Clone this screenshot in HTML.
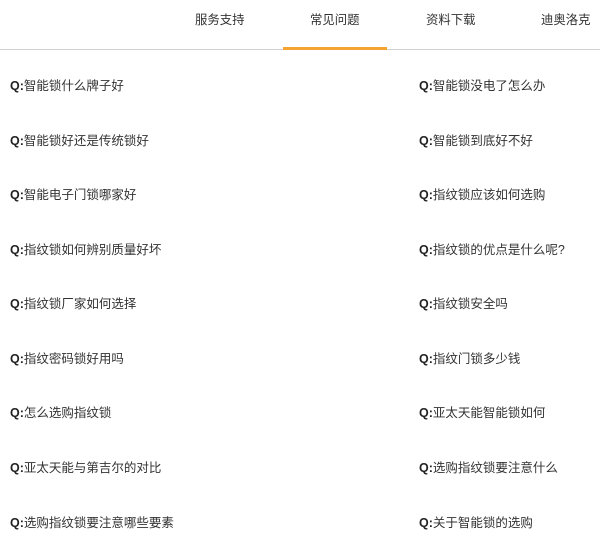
<!DOCTYPE html>
<html><head><meta charset="utf-8"><style>
body{margin:0;width:600px;height:534px;background:#fff;font-family:"Liberation Sans","Noto Sans CJK SC",sans-serif;overflow:hidden;position:relative}
.nav{position:absolute;top:0;left:0;width:600px;height:49px;border-bottom:1px solid #d0d0d0}
.t{position:absolute;top:11px;font-size:12.4px;color:#333;line-height:18px;white-space:nowrap}
.bar{position:absolute;left:283px;top:47px;width:104px;height:3px;background:#f5a331}
.q{position:absolute;font-size:12.5px;color:#333;line-height:16px;white-space:nowrap}
.q b{color:#222}
</style></head><body>
<div class="nav">
<div class="t" style="left:195px">服务支持</div>
<div class="t" style="left:310px">常见问题</div>
<div class="t" style="left:426px">资料下载</div>
<div class="t" style="left:541px">迪奥洛克</div>
<div class="bar"></div>
</div>
<div class="q" style="left:10px;top:78px"><b>Q:</b>智能锁什么牌子好</div>
<div class="q" style="left:419px;top:78px"><b>Q:</b>智能锁没电了怎么办</div>
<div class="q" style="left:10px;top:133px"><b>Q:</b>智能锁好还是传统锁好</div>
<div class="q" style="left:419px;top:133px"><b>Q:</b>智能锁到底好不好</div>
<div class="q" style="left:10px;top:187px"><b>Q:</b>智能电子门锁哪家好</div>
<div class="q" style="left:419px;top:187px"><b>Q:</b>指纹锁应该如何选购</div>
<div class="q" style="left:10px;top:242px"><b>Q:</b>指纹锁如何辨别质量好坏</div>
<div class="q" style="left:419px;top:242px"><b>Q:</b>指纹锁的优点是什么呢?</div>
<div class="q" style="left:10px;top:296px"><b>Q:</b>指纹锁厂家如何选择</div>
<div class="q" style="left:419px;top:296px"><b>Q:</b>指纹锁安全吗</div>
<div class="q" style="left:10px;top:351px"><b>Q:</b>指纹密码锁好用吗</div>
<div class="q" style="left:419px;top:351px"><b>Q:</b>指纹门锁多少钱</div>
<div class="q" style="left:10px;top:405px"><b>Q:</b>怎么选购指纹锁</div>
<div class="q" style="left:419px;top:405px"><b>Q:</b>亚太天能智能锁如何</div>
<div class="q" style="left:10px;top:460px"><b>Q:</b>亚太天能与第吉尔的对比</div>
<div class="q" style="left:419px;top:460px"><b>Q:</b>选购指纹锁要注意什么</div>
<div class="q" style="left:10px;top:515px"><b>Q:</b>选购指纹锁要注意哪些要素</div>
<div class="q" style="left:419px;top:515px"><b>Q:</b>关于智能锁的选购</div>
</body></html>
